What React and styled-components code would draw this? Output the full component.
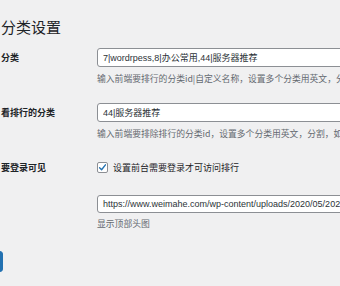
import React from 'react'
import styled, { createGlobalStyle } from 'styled-components'

const GlobalStyle = createGlobalStyle`
    html, body {
        margin: 0;
        padding: 0;
        background: #f0f0f1;
        overflow: hidden;
    }
    body {
        width: 340px;
        height: 286px;
        font-family: "Liberation Sans", "Noto Sans CJK SC", sans-serif;
        color: #1d2327;
    }
`;

const rows = [
    {
        label: "分类",
        value: "7|wordrpess,8|办公常用,44|服务器推荐",
        desc: "输入前端要排行的分类id|自定义名称，设置多个分类用英文，分割，如：7|wordrpess",
    },
    {
        label: "看排行的分类",
        value: "44|服务器推荐",
        desc: "输入前端要排除排行的分类id，设置多个分类用英文，分割，如：44",
    },
];

function App() {
    return (
        <Page>
            <GlobalStyle />
            <Title>分类设置</Title>
            <Form>
                {rows.map((row, index) => (
                    <Row key={index}>
                        <Label>{row.label}</Label>
                        <Field>
                            <Input defaultValue={row.value} />
                            <Desc>{row.desc}</Desc>
                        </Field>
                    </Row>
                ))}
                <Row top={10} bottom={6}>
                    <Label>要登录可见</Label>
                    <Field>
                        <CheckLine>
                            <Box>
                                <svg width="9" height="9" viewBox="0 0 20 20">
                                    <path d="M3.5 10.5 L8 15 L16.5 4" fill="none" stroke="#2271b1" strokeWidth="3" strokeLinecap="round" strokeLinejoin="round" />
                                </svg>
                            </Box>
                            设置前台需要登录才可访问排行
                        </CheckLine>
                    </Field>
                </Row>
                <Row top={12}>
                    <Label />
                    <Field>
                        <Input small defaultValue="https://www.weimahe.com/wp-content/uploads/2020/05/2020050812.jpg" />
                        <Desc tight>显示顶部头图</Desc>
                    </Field>
                </Row>
            </Form>
            <SaveButton aria-label="保存更改" />
        </Page>
    )
}

export default App;

const Page = styled.div`
    padding-top: 17px;
`;

const Title = styled.h1`
    margin: 0 0 1px 0;
    padding-left: 1px;
    font-family: "Noto Sans CJK SC", sans-serif;
    font-size: 15px;
    font-weight: 400;
    line-height: 20px;
    color: #1d2327;
`;

const Form = styled.div`
    display: flex;
    flex-direction: column;
`;

const Row = styled.div`
    display: grid;
    grid-template-columns: 97px 1fr;
    padding: ${props => props.top || 10}px 0 ${props => props.bottom || 8}px 0;
`;

const Label = styled.div`
    padding-left: 1px;
    font-family: "Noto Sans CJK SC", sans-serif;
    font-size: 9px;
    font-weight: 700;
    line-height: 19px;
    white-space: nowrap;
    color: #1d2327;
`;

const Field = styled.div`
    display: flex;
    flex-direction: column;
    min-width: 0;
`;

const Input = styled.input`
    box-sizing: border-box;
    display: block;
    width: 320px;
    height: ${props => props.small ? 18 : 19}px;
    margin: 0;
    padding: 0 5px;
    border: 1px solid #8c8f94;
    border-radius: 3px;
    background: #fff;
    font-family: "Liberation Sans", "Noto Sans CJK SC", sans-serif;
    font-size: 9px;
    color: #2c3338;
    outline: none;
`;

const Desc = styled.p`
    margin: ${props => props.tight ? 4 : 5}px 0 0 0;
    font-family: "Noto Sans CJK SC", sans-serif;
    font-size: 8.8px;
    line-height: 13px;
    white-space: nowrap;
    color: #646970;
`;

const CheckLine = styled.label`
    display: flex;
    align-items: center;
    gap: 5px;
    height: 19px;
    font-family: "Noto Sans CJK SC", sans-serif;
    font-size: 9px;
    color: #1d2327;
    white-space: nowrap;
`;

const Box = styled.span`
    box-sizing: border-box;
    display: flex;
    align-items: center;
    justify-content: center;
    width: 11px;
    height: 11px;
    border: 1px solid #8c8f94;
    border-radius: 2px;
    background: #fff;
`;

const SaveButton = styled.button`
    display: block;
    margin: 13px 0 0 -57px;
    width: 60px;
    height: 21px;
    border: 1px solid #2271b1;
    border-radius: 3px;
    background: #2271b1;
`;
